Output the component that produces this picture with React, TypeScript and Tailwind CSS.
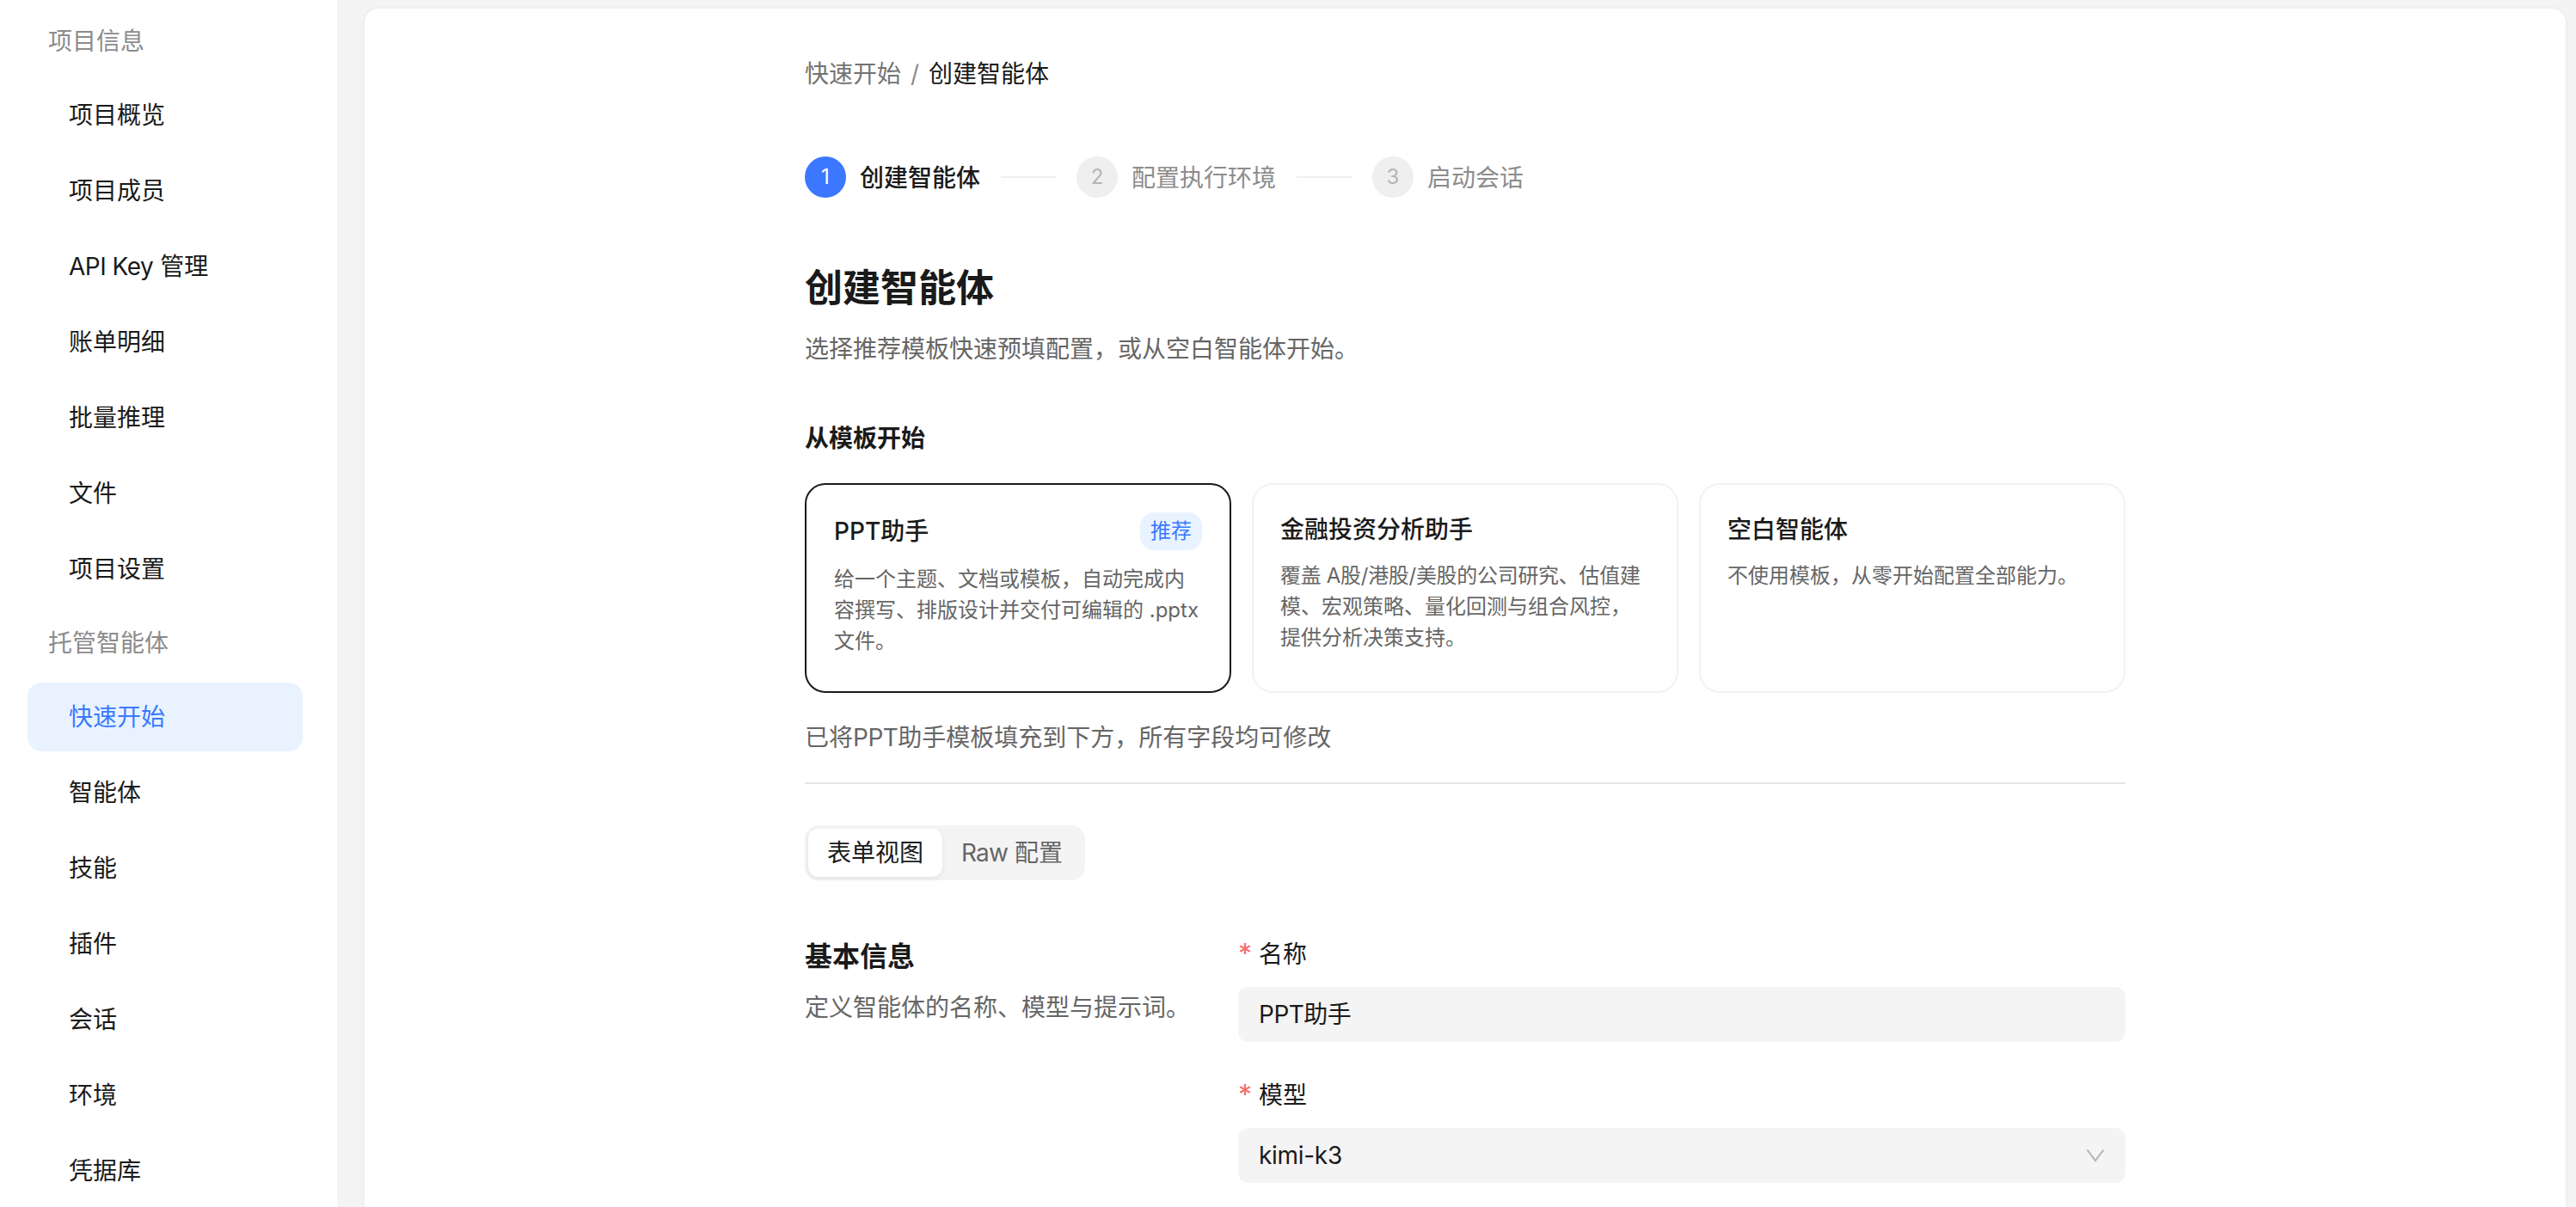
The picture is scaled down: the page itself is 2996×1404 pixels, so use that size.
const projectItems = ['项目概览', '项目成员', 'API Key 管理', '账单明细', '批量推理', '文件', '项目设置'];
const agentItems = ['快速开始', '智能体', '技能', '插件', '会话', '环境', '凭据库'];

const templates = [
  {
    title: 'PPT助手',
    desc: <>给一个主题、文档或模板，自动完成内容撰写、排版设计并交付可编辑的 .pptx 文件。</>,
    selected: true,
  },
  {
    title: '金融投资分析助手',
    desc: (
      <>
        <span className="block tracking-[-0.3px]">覆盖 A股/港股/美股的公司研究、估值建</span>
        <span className="block">模、宏观策略、量化回测与组合风控，提供分析决策支持。</span>
      </>
    ),
    selected: false,
  },
  {
    title: '空白智能体',
    desc: <>不使用模板，从零开始配置全部能力。</>,
    selected: false,
  },
];

const steps = [
  { n: 1, label: '创建智能体', active: true },
  { n: 2, label: '配置执行环境', active: false },
  { n: 3, label: '启动会话', active: false },
];

function Sidebar() {
  return (
    <aside className="w-[392px] shrink-0 bg-white pl-[32px] pr-[40px] pt-[2px]">
      <div className="flex h-[92px] items-center pl-[24px] text-[#8c8c8c]">项目信息</div>
      {projectItems.map(item => (
        <div key={item} className="mb-[8px] flex h-[80px] items-center pl-[48px] text-[#1a1a1a]">
          {item === 'API Key 管理' ? <><span className="tracking-[-0.5px]">API Key</span>&nbsp;管理</> : item}
        </div>
      ))}
      <div className="-mt-[8px] flex h-[92px] items-center pl-[24px] text-[#8c8c8c]">托管智能体</div>
      {agentItems.map(item => (
        <div
          key={item}
          className={
            item === '快速开始'
              ? 'mb-[8px] flex h-[80px] items-center rounded-[16px] bg-[#e8f3ff] pl-[48px] text-[#3b78ff]'
              : 'mb-[8px] flex h-[80px] items-center pl-[48px] text-[#1a1a1a]'
          }
        >
          {item}
        </div>
      ))}
    </aside>
  );
}

function Stepper() {
  return (
    <div className="mt-[76px] flex items-center">
      {steps.map((s, i) => (
        <div key={s.n} className="flex items-center">
          {i > 0 && <div className="mx-[24px] h-[2px] w-[64px] bg-[#efefef]" />}
          <div
            className={
              s.active
                ? 'flex h-[48px] w-[48px] items-center justify-center rounded-full bg-[#3b78ff] text-[24px] text-white'
                : 'flex h-[48px] w-[48px] items-center justify-center rounded-full bg-[#efefef] text-[24px] text-[#b5b5b5]'
            }
          >
            {s.n}
          </div>
          <div className={s.active ? 'ml-[16px] pt-[1px] font-medium text-[#1a1a1a]' : 'ml-[16px] pt-[1px] text-[#8c8c8c]'}>{s.label}</div>
        </div>
      ))}
    </div>
  );
}

function TemplateCard({ title, desc, selected }: { title: string; desc: React.ReactNode; selected: boolean }) {
  return (
    <div
      className={
        selected
          ? 'h-[244px] rounded-[24px] border-2 border-[#1a1a1a] bg-white px-[32px] pt-[32px]'
          : 'h-[244px] rounded-[24px] border-2 border-[#f2f2f2] bg-white pl-[31px] pr-[32px] pt-[32px]'
      }
    >
      <div className={selected ? 'flex h-[44px] items-center justify-between' : 'flex h-[40px] items-center justify-between'}>
        <span className="font-medium text-[#1a1a1a]">{title}</span>
        {selected && (
          <span className="flex h-[44px] items-center rounded-[16px] bg-[#e8f3ff] px-[12px] text-[24px] text-[#3b78ff]">推荐</span>
        )}
      </div>
      <p className="mt-[16px] text-[24px] leading-[36px] text-[#666666]">{desc}</p>
    </div>
  );
}

function Field({ label, children }: { label: string; children: React.ReactNode }) {
  return (
    <div className="mb-[42px]">
      <div className="flex h-[40px] items-center text-[#1a1a1a]">
        <span className="w-[24px] text-[32px] leading-[40px] text-[#f76c6c]">*</span>
        {label}
      </div>
      <div className="mt-[18px] flex h-[64px] items-center justify-between rounded-[12px] bg-[#f4f4f4] px-[24px] text-[#1a1a1a]">
        {children}
      </div>
    </div>
  );
}

export default function App() {
  return (
    <div
      className="flex h-[1404px] overflow-hidden bg-[#f4f4f4] text-[28px] leading-[40px]"
      style={{ fontFamily: 'Inter, "Noto Sans CJK SC", sans-serif' }}
    >
      <Sidebar />
      <main className="min-w-0 flex-1 pl-[32px] pr-[12px] pt-[10px]">
        <div className="h-full rounded-t-[16px] bg-white pt-[56px] shadow-[0_0_6px_rgba(0,0,0,0.05)]">
          <div className="mx-auto w-[1536px]">
            <div className="flex items-center">
              <span className="text-[#737373]">快速开始</span>
              <span className="mx-[11px] text-[#8c8c8c]">/</span>
              <span className="text-[#1a1a1a]">创建智能体</span>
            </div>

            <Stepper />

            <h1 className="mt-[75px] text-[44px] font-semibold leading-[60px] text-[#1a1a1a]">创建智能体</h1>
            <p className="mt-[21px] text-[#666666]">选择推荐模板快速预填配置，或从空白智能体开始。</p>

            <h2 className="mt-[64px] font-semibold text-[#1a1a1a]">从模板开始</h2>
            <div className="mt-[32px] grid grid-cols-3 gap-[24px]">
              {templates.map(t => (
                <TemplateCard key={t.title} {...t} />
              ))}
            </div>

            <p className="mt-[32px] text-[#666666]">已将<span className="tracking-[-0.5px]">PPT</span>助手模板填充到下方，所有字段均可修改</p>
            <div className="mt-[32px] h-[2px] bg-[#e5e5e5]" />

            <div className="mt-[48px] inline-flex h-[64px] items-center rounded-[16px] bg-[#f4f4f4] p-[4px]">
              <div className="flex h-[56px] items-center rounded-[12px] bg-white px-[22px] text-[#1a1a1a] shadow-[0_2px_6px_rgba(0,0,0,0.08)]">表单视图</div>
              <div className="flex h-[56px] items-center px-[22px] text-[#666666]"><span className="tracking-[-0.8px]">Raw</span>&nbsp;配置</div>
            </div>

            <div className="mt-[66px] flex">
              <div className="w-[504px] shrink-0">
                <h3 className="text-[32px] font-semibold leading-[46px] text-[#1a1a1a]">基本信息</h3>
                <p className="mt-[16px] text-[#666666]">定义智能体的名称、模型与提示词。</p>
              </div>
              <div className="min-w-0 flex-1">
                <Field label="名称"><span className="tracking-[-0.5px]">PPT助手</span></Field>
                <Field label="模型">
                  <span className="tracking-[-0.3px]">kimi-k3</span>
                  <svg width="22" height="16" viewBox="0 0 22 16" fill="none" stroke="#b3b3b3" strokeWidth="2">
                    <path d="M1.5 1.5 11 14l9.5-12.5" />
                  </svg>
                </Field>
              </div>
            </div>
          </div>
        </div>
      </main>
    </div>
  );
}
